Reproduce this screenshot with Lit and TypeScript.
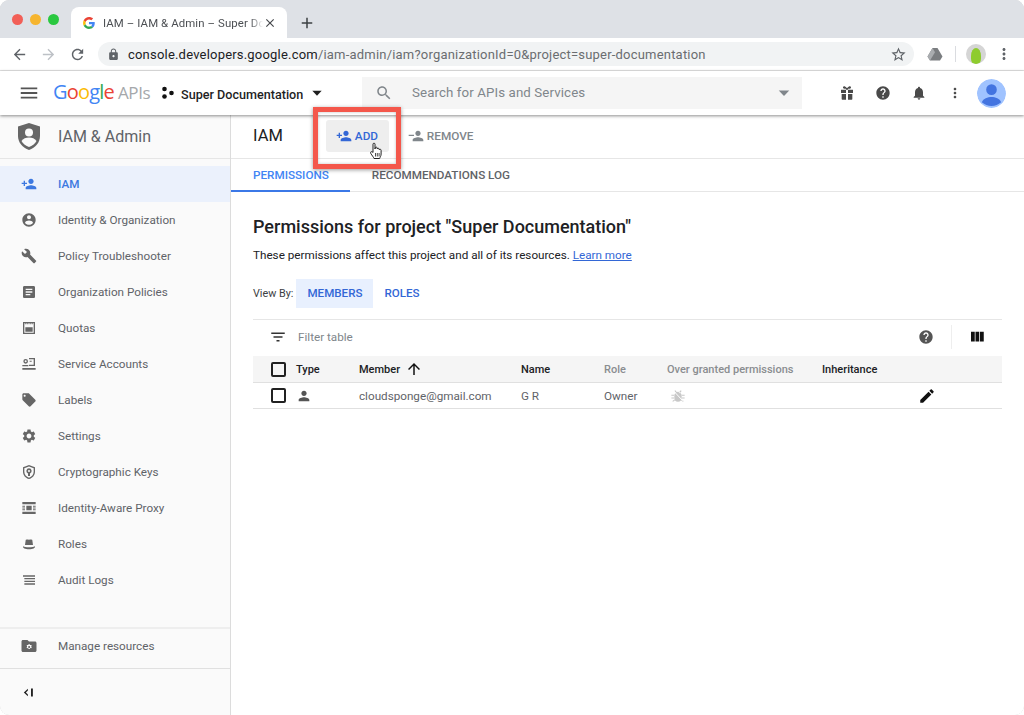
import { LitElement, html, css, svg } from 'lit';
import { customElement } from 'lit/decorators.js';

const P = {
  personAdd: 'M15 12c2.21 0 4-1.79 4-4s-1.79-4-4-4-4 1.79-4 4 1.79 4 4 4zm-9-2V7H4v3H1v2h3v3h2v-3h3v-2H6zm9 4c-2.67 0-8 1.34-8 4v2h16v-2c0-2.66-5.33-4-8-4z',
  personRemove: 'M15 12c2.21 0 4-1.79 4-4s-1.79-4-4-4-4 1.79-4 4 1.79 4 4 4zM1 10v2h8v-2H1zm14 4c-2.67 0-8 1.34-8 4v2h16v-2c0-2.66-5.33-4-8-4z',
  account: 'M12 2C6.48 2 2 6.48 2 12s4.48 10 10 10 10-4.48 10-10S17.52 2 12 2zm0 3c1.66 0 3 1.34 3 3s-1.34 3-3 3-3-1.34-3-3 1.34-3 3-3zm0 14.2c-2.5 0-4.71-1.28-6-3.22.03-1.99 4-3.08 6-3.08 1.99 0 5.97 1.09 6 3.08-1.29 1.94-3.5 3.22-6 3.22z',
  build: 'M22.7 19l-9.1-9.1c.9-2.3.4-5-1.5-6.9-2-2-5-2.4-7.4-1.3L9 6 6 9 1.6 4.7C.4 7.1.9 10.1 2.9 12.1c1.9 1.9 4.6 2.4 6.9 1.5l9.1 9.1c.4.4 1 .4 1.4 0l2.3-2.3c.5-.4.5-1.1.1-1.4z',
  article: 'M19 3H5c-1.1 0-2 .9-2 2v14c0 1.1.9 2 2 2h14c1.1 0 2-.9 2-2V5c0-1.1-.9-2-2-2zm-5 14H7v-2h7v2zm3-4H7v-2h10v2zm0-4H7V7h10v2z',
  quotas: 'M3 3h18v18H3V3zm2 2v14h14V5h-1.500v1.500H16V5h-1.500v1.500H13V5h-2v1.500H9.500V5H8v1.500H6.500V5H5zM6.500 11h11v6.500h-11V11z',
  service: 'M7 4.500a3.500 3.500 0 1 1 0 7 3.500 3.500 0 0 1 0-7zm0 2a1.500 1.500 0 1 0 0 3 1.500 1.500 0 0 0 0-3zM12 3h9v12h-9v-2h7V5h-7V3zm1 4h3v1.500h-3V7zM2 13.500h9v2H2v-2zM2 18h20v2.500H2V18z',
  label: 'M21.41 11.58l-9-9C12.05 2.22 11.55 2 11 2H4c-1.1 0-2 .9-2 2v7c0 .55.22 1.05.59 1.42l9 9c.36.36.86.58 1.41.58.55 0 1.05-.22 1.41-.59l7-7c.37-.36.59-.86.59-1.41 0-.55-.23-1.06-.59-1.42zM5.5 7C4.67 7 4 6.33 4 5.5S4.67 4 5.5 4 7 4.67 7 5.5 6.33 7 5.5 7z',
  settings: 'M19.14 12.94c.04-.3.06-.61.06-.94 0-.32-.02-.64-.07-.94l2.03-1.58c.18-.14.23-.41.12-.61l-1.92-3.32c-.12-.22-.37-.29-.59-.22l-2.39.96c-.5-.38-1.03-.7-1.62-.94l-.36-2.54c-.04-.24-.24-.41-.48-.41h-3.84c-.24 0-.43.17-.47.41l-.36 2.54c-.59.24-1.13.57-1.62.94l-2.39-.96c-.22-.08-.47 0-.59.22L2.74 8.87c-.12.21-.08.47.12.61l2.03 1.58c-.05.3-.09.63-.09.94s.02.64.07.94l-2.03 1.58c-.18.14-.23.41-.12.61l1.92 3.32c.12.22.37.29.59.22l2.39-.96c.5.38 1.03.7 1.62.94l.36 2.54c.05.24.24.41.48.41h3.84c.24 0 .44-.17.47-.41l.36-2.54c.59-.24 1.13-.56 1.62-.94l2.39.96c.22.08.47 0 .59-.22l1.92-3.32c.12-.22.07-.47-.12-.61l-2.01-1.58zM12 15.6c-1.98 0-3.6-1.62-3.6-3.6s1.62-3.6 3.6-3.6 3.6 1.62 3.6 3.6-1.62 3.6-3.6 3.6z',
  keys: 'M12 1.500L3 5v6.500c0 5.200 3.800 9.700 9 11 5.200-1.300 9-5.800 9-11V5l-9-3.500zm0 2.200l7 2.700v5.100c0 4.100-2.900 7.800-7 9-4.100-1.200-7-4.900-7-9V6.400l7-2.700zM12 6.500a4 4 0 0 0-1.500 7.700V18h3v-3.800A4 4 0 0 0 12 6.500zm0 2.500a1.500 1.500 0 1 1 0 3 1.500 1.500 0 0 1 0-3z',
  proxy: 'M2 3h20v3.500H2V3zM2 17.500h20V21H2v-3.500zM8 8.500h8v7H8v-7zM2 8.500h4V10H2V8.500zM2 11.250h4v1.500H2v-1.500zM2 14h4v1.500H2V14zM18 8.500h4V10h-4V8.500zM18 11.250h4v1.500h-4v-1.500zM18 14h4v1.500h-4V14z',
  roles: 'M7 6.500C7.500 5 9 5.500 12 5.500s4.500-.5 5 1l1 7H6l1-7zM3 15.500c2 1 5 1.500 9 1.500s7-.5 9-1.500c.5 3-3 4.500-9 4.500s-9.500-1.500-9-4.500z',
  audit: 'M3 5h18v2H3V5zm2 4h16v2H5V9zm0 4h16v2H5v-2zm0 4h16v2H5v-2z',
  folder: 'M10 4H4c-1.100 0-2 .9-2 2v12c0 1.100.9 2 2 2h16c1.100 0 2-.9 2-2V8c0-1.100-.9-2-2-2h-8l-2-2zm3 5.500l.5 1.300 1.400-.3.8 1.100-.9 1.100.9 1.100-.8 1.100-1.400-.3-.5 1.300h-1.600l-.5-1.300-1.400.3-.7-1.100.9-1.100-.9-1.100.7-1.100 1.400.3.500-1.300H13zM12.200 12a1.400 1.400 0 1 0 0 2.800 1.400 1.400 0 0 0 0-2.800z',
  help: 'M12 2C6.48 2 2 6.48 2 12s4.48 10 10 10 10-4.48 10-10S17.52 2 12 2zm1 17h-2v-2h2v2zm2.07-7.750l-.9.920C13.450 12.900 13 13.500 13 15h-2v-.5c0-1.100.45-2.100 1.170-2.830l1.240-1.260c.37-.36.59-.86.59-1.410 0-1.100-.9-2-2-2s-2 .9-2 2H8c0-2.210 1.790-4 4-4s4 1.790 4 4c0 .88-.36 1.680-.93 2.250z',
  bell: 'M12 22c1.100 0 2-.9 2-2h-4c0 1.100.89 2 2 2zm6-6v-5c0-3.070-1.640-5.640-4.500-6.320V4c0-.83-.67-1.500-1.500-1.500s-1.500.67-1.500 1.500v.68C7.630 5.360 6 7.920 6 11v5l-2 2v1h16v-1l-2-2z',
  gift: 'M3 7h7.500V5.500C9 6 6.500 5.800 6 4.300 5.600 2.800 7.500 1.500 9 2.300c1.200.6 2 1.700 3 2.700 1-1 1.800-2.100 3-2.700 1.500-.8 3.400.5 3 2-.5 1.500-3 1.700-4.500 1.200V7H21v5h-7.500V7h-3v5H3V7zm1 6.500h6.500V22H5a1 1 0 0 1-1-1v-7.500zm9.500 0H20V21a1 1 0 0 1-1 1h-5.500v-8.500z',
  search: 'M15.500 14h-.79l-.28-.27C15.410 12.590 16 11.110 16 9.500 16 5.910 13.090 3 9.500 3S3 5.910 3 9.500 5.910 16 9.500 16c1.610 0 3.090-.59 4.230-1.570l.27.28v.79l5 4.990L20.490 19l-4.990-5zm-6 0C7.010 14 5 11.990 5 9.500S7.010 5 9.500 5 14 7.010 14 9.500 11.990 14 9.500 14z',
  menu: 'M3 18h18v-2H3v2zm0-5h18v-2H3v2zm0-7v2h18V6H3z',
  more: 'M12 8c1.100 0 2-.9 2-2s-.9-2-2-2-2 .9-2 2 .9 2 2 2zm0 2c-1.100 0-2 .9-2 2s.9 2 2 2 2-.9 2-2-.9-2-2-2zm0 6c-1.100 0-2 .9-2 2s.9 2 2 2 2-.9 2-2-.9-2-2-2z',
  edit: 'M3 17.250V21h3.750L17.810 9.940l-3.750-3.750L3 17.250zM20.710 7.040c.39-.39.39-1.020 0-1.410l-2.340-2.340c-.39-.39-1.020-.39-1.410 0l-1.830 1.830 3.750 3.750 1.830-1.830z',
  filter: 'M10 18h4v-2h-4v2zM3 6v2h18V6H3zm3 7h12v-2H6v2z',
  columns: 'M10 18h5V5h-5v13zm-6 0h5V5H4v13zM16 5v13h5V5h-5z',
  person: 'M12 12c2.210 0 4-1.790 4-4s-1.790-4-4-4-4 1.790-4 4 1.790 4 4 4zm0 2c-2.670 0-8 1.340-8 4v2h16v-2c0-2.660-5.330-4-8-4z',
  up: 'M4 12l1.410 1.410L11 7.830V20h2V7.830l5.580 5.590L20 12l-8-8-8 8z',
  star: 'M22 9.240l-7.190-.62L12 2 9.190 8.630 2 9.240l5.460 4.730L5.820 21 12 17.270 18.180 21l-1.630-7.030L22 9.240zM12 15.400l-3.760 2.270 1-4.280-3.320-2.880 4.380-.38L12 6.100l1.710 4.040 4.380.38-3.320 2.880 1 4.280L12 15.400z',
  back: 'M20 11H7.830l5.590-5.590L12 4l-8 8 8 8 1.410-1.410L7.830 13H20v-2z',
  forward: 'M12 4l-1.410 1.410L16.170 11H4v2h12.170l-5.580 5.590L12 20l8-8z',
  refresh: 'M17.650 6.350C16.200 4.900 14.210 4 12 4c-4.420 0-7.990 3.580-7.990 8s3.570 8 7.990 8c3.730 0 6.840-2.550 7.730-6h-2.080c-.82 2.330-3.040 4-5.650 4-3.310 0-6-2.690-6-6s2.690-6 6-6c1.660 0 3.140.69 4.220 1.780L13 11h7V4l-2.350 2.350z',
  lock: 'M18 8h-1V6c0-2.760-2.240-5-5-5S7 3.240 7 6v2H6c-1.100 0-2 .9-2 2v10c0 1.100.9 2 2 2h12c1.100 0 2-.9 2-2V10c0-1.100-.9-2-2-2zm-6 9c-1.100 0-2-.9-2-2s.9-2 2-2 2 .9 2 2-.9 2-2 2zm3.100-9H8.900V6c0-1.710 1.390-3.100 3.100-3.100 1.710 0 3.100 1.390 3.100 3.100v2z',
  close: 'M19 6.410L17.590 5 12 10.590 6.410 5 5 6.410 10.590 12 5 17.590 6.410 19 12 13.410 17.590 19 19 17.590 13.410 12z',
  add: 'M19 13h-6v6h-2v-6H5v-2h6V5h2v6h6v2z',
  drop: 'M5 8.500l7 7.500 7-7.500z',
  collapse: 'M11 6L4.500 12l6.500 6v-2.800L7.800 12 11 8.800V6zM16 5.500h3v13h-3v-13z',
};

const icon = (d: string, size = 18) => html`<svg class="ic" width=${size} height=${size} viewBox="0 0 24 24" fill="currentColor"><path d=${d}></path></svg>`;

const gMark = svg`<path fill="#ea4335" d="M12 4.800c1.800 0 3.400.6 4.700 1.800l3.400-3.400C18 1.300 15.300.2 12 .2 7.400.2 3.400 2.900 1.400 6.800l4 3.100C6.400 7 9 4.800 12 4.800z"/><path fill="#4285f4" d="M23.500 12.300c0-.9-.1-1.600-.2-2.300H12v4.500h6.500c-.3 1.500-1.100 2.700-2.400 3.600l3.800 2.900c2.200-2 3.600-5 3.600-8.700z"/><path fill="#fbbc05" d="M5.400 14.200c-.3-.7-.4-1.400-.4-2.200s.1-1.500.4-2.200l-4-3.100C.6 8.300.2 10.100.2 12s.4 3.700 1.200 5.300l4-3.100z"/><path fill="#34a853" d="M12 23.800c3.200 0 5.900-1 7.900-2.900l-3.800-2.900c-1.100.7-2.400 1.200-4.100 1.200-3 0-5.600-2-6.600-4.900l-4 3.100c2 3.900 6 6.400 10.600 6.400z"/>`;

const NAV: [string, string][] = [
  ['Identity & Organization', P.account],
  ['Policy Troubleshooter', P.build],
  ['Organization Policies', P.article],
  ['Quotas', P.quotas],
  ['Service Accounts', P.service],
  ['Labels', P.label],
  ['Settings', P.settings],
  ['Cryptographic Keys', P.keys],
  ['Identity-Aware Proxy', P.proxy],
  ['Roles', P.roles],
  ['Audit Logs', P.audit],
];

@customElement('app-root')
export class AppRoot extends LitElement {
  static styles = css`
    :host {
      display: block;
      width: 1024px;
      height: 715px;
      overflow: hidden;
      background: #fff;
      font-family: Roboto, "Liberation Sans", sans-serif;
      color: #3c4043;
    }
    .ic { display: block; flex: none; }
    .window {
      position: relative;
      height: 715px;
      display: flex;
      flex-direction: column;
      border-radius: 9px;
      overflow: hidden;
      box-shadow: inset 0 0 0 1px #d4d4d4;
    }
    .tabstrip {
      height: 38px;
      flex: none;
      background: #dee1e6;
      display: flex;
      align-items: flex-end;
      padding-left: 12px;
    }
    .lights { display: flex; gap: 7px; align-self: flex-start; margin-top: 14px; }
    .lights i { width: 11px; height: 11px; border-radius: 50%; }
    .tab {
      margin-left: 12px;
      width: 216px;
      height: 31px;
      background: #fff;
      border-radius: 8px 8px 0 0;
      display: flex;
      align-items: center;
      padding-left: 12px;
      box-sizing: border-box;
      font-size: 11.4px;
      letter-spacing: .1px;
      color: #4c4f53;
      white-space: nowrap;
    }
    .tab .title {
      width: 160px;
      margin-left: 8px;
      -webkit-mask-image: linear-gradient(90deg, #000 92%, transparent);
      mask-image: linear-gradient(90deg, #000 92%, transparent);
    }
    .tab .x { color: #45484c; margin-left: 0; }
    .newtab { margin: 0 0 6px 11px; color: #3c4043; }
    .toolbar {
      height: 32px;
      flex: none;
      background: #fff;
      display: flex;
      align-items: center;
      padding: 0 8px 0 11px;
      border-bottom: 1px solid #e4e4e4;
      color: #5f6368;
    }
    .nav-btns { display: flex; gap: 12px; width: 87px; }
    .omni {
      width: 816px;
      height: 24px;
      flex: none;
      background: #f1f3f4;
      border-radius: 12px;
      display: flex;
      align-items: center;
      padding: 0 7px 0 9px;
      box-sizing: border-box;
      font-size: 13px;
      letter-spacing: 0.2px;
      white-space: nowrap;
    }
    .omni b { font-weight: 400; color: #202124; }
    .omni .url { margin-left: 8px; color: #6a6d70; flex: 1; }
    .exts { display: flex; align-items: center; margin-left: 13px; gap: 10px; }
    .sep { width: 1px; height: 16px; margin-left: 2px; background: #dadce0; }
    .profile {
      width: 20px; height: 20px; border-radius: 50%; background: #d5d5d5;
      display: flex; align-items: flex-end; justify-content: center; overflow: hidden;
    }
    .profile i { width: 10px; height: 16px; background: #8ecc2e; border-radius: 50% 50% 35% 35%; }
    .appbar {
      position: relative;
      z-index: 2;
      height: 44px;
      flex: none;
      background: #fff;
      display: flex;
      align-items: center;
      box-shadow: 0 1px 3px rgba(0,0,0,.45);
      color: #4a4a4a;
    }
    .burger { margin-left: 18px; color: #555; }
    .logo {
      margin-left: 13px; width: 97px; padding-bottom: 4px; font-size: 20px; white-space: nowrap;
      font-family: "Open Sans", Roboto, sans-serif; letter-spacing: -.8px;
    }
    .logo em { font-style: normal; color: #a5a8ab; margin-left: 4px; letter-spacing: -.4px; font-size: 17px; }
    .project { display: flex; align-items: center; margin-left: 11px; width: 201px; font-size: 12.6px; color: #1f1f1f; font-weight: 500; white-space: nowrap; }
    .project svg:first-child { margin-right: 6px; }
    .project .name { padding-top: 2px; }
    .project .caret { margin-left: 6px; }
    .search {
      width: 440px; height: 32px; flex: none; background: #f5f5f5;
      display: flex; align-items: center; padding: 0 9px 0 13px; box-sizing: border-box;
      font-size: 13.3px; color: #80868b; margin-right: 37px;
    }
    .search span { flex: 1; margin-left: 19px; padding-bottom: 2px; letter-spacing: .1px; }
    .app-icons { display: flex; align-items: center; gap: 20px; }
    .avatar { width: 29px; height: 29px; margin-left: -6px; border-radius: 50%; }
    .body { flex: 1; display: flex; min-height: 0; }
    .side {
      width: 231px; flex: none; box-sizing: border-box; background: #fafafa;
      border-right: 1px solid #dcdcdc; display: flex; flex-direction: column;
    }
    .side-head {
      height: 44px; flex: none; box-sizing: border-box; border-bottom: 1px solid #e6e6e6;
      display: flex; align-items: center; padding-left: 17px; gap: 17px; padding-bottom: 1px;
      font-size: 16px; color: #5f6368;
    }
    .side-list { flex: 1; padding-top: 7px; }
    .item {
      height: 36px; display: flex; align-items: center; padding-left: 21px; gap: 21px;
      font-size: 11.7px; color: #5f6368;
    }
    .item span { padding-bottom: 1px; }
    .item.on { background: #ebf1fc; color: #3c78e0; font-weight: 500; }
    .item .ic { color: #666; }
    .item.on .ic { color: #3c78e0; }
    .side-foot {
      border-top: 2px solid #eee; height: 41px; flex: none; display: flex; align-items: center;
      padding: 0 0 6px 20px; gap: 20px; font-size: 11.7px; color: #5f6368; box-sizing: border-box;
    }
    .side-foot .ic { color: #666; }
    .side-end { border-top: 1px solid #e0e0e0; height: 47px; flex: none; display: flex; align-items: center; padding-left: 21px; color: #222; box-sizing: border-box; }
    main { flex: 1; min-width: 0; background: #fff; display: flex; flex-direction: column; }
    .head {
      height: 44px; flex: none; box-sizing: border-box; border-bottom: 1px solid #e6e6e6; padding-bottom: 2px;
      display: flex; align-items: center; padding-left: 22px; font-size: 16.5px; color: #202124;
    }
    .btn {
      display: flex; align-items: center; gap: 3px; height: 32px; border-radius: 3px;
      font-size: 11.8px; font-weight: 500; box-sizing: border-box; padding: 0 10px;
    }
    .btn.add { margin-left: 43px; width: 63px; background: #eee; color: #3367d6; }
    .btn.remove { margin-left: 9px; color: #80868b; }
    .tabs {
      height: 33px; flex: none; box-sizing: border-box; border-bottom: 1px solid #e6e6e6;
      display: flex; font-size: 11.7px; font-weight: 500; color: #5f6368;
    }
    .tabs div { display: flex; align-items: center; padding: 0 21px 0 22px; height: 32px; box-sizing: border-box; }
    .tabs .on { color: #4285f4; border-bottom: 2px solid #3b78e7; height: 33px; }
    .page { padding: 24px 22px 0; }
    h1 { margin: 0; font-size: 18px; font-weight: 500; color: #202124; line-height: 22px; }
    .sub { margin-top: 7px; font-size: 11.7px; color: #202124; line-height: 20px; }
    .sub a { color: #3367d6; text-decoration: underline; }
    .view { margin-top: 14px; display: flex; align-items: center; font-size: 10.8px; color: #3c4043; height: 29px; }
    .chip { height: 29px; display: flex; align-items: center; padding: 0 11px 1px; box-sizing: border-box; font-size: 11.6px; font-weight: 500; color: #3367d6; }
    .chip.on { background: #e8f0fe; margin-left: 3px; }
    .table { margin-top: 11px; width: 749px; border-top: 1px solid #e6e6e6; font-size: 11.7px; }
    .filter { height: 36px; display: flex; align-items: center; padding: 0 0 2px 16px; box-sizing: border-box; color: #80868b; }
    .filter > .ic { color: #333; }
    .filter .ph { margin-left: 11px; flex: 1; }
    .filter .end { display: flex; align-items: center; color: #555; padding-right: 16px; }
    .filter .sep { height: 24px; margin: 0 16px 0 17px; background: #eee; }
    .filter .cols { color: #111; }
    .row {
      display: grid;
      grid-template-columns: 25px 63px 162px 83px 63px 155px 98px 1fr;
      align-items: center;
      padding-left: 18px;
      height: 26px;
      box-sizing: border-box;
      border-bottom: 1px solid #e0e0e0;
      color: #5f6368;
    }
    .row.th { height: 27px; background: #f5f5f5; font-size: 11px; font-weight: 500; color: #202124; }
    .row .dim { color: #80868b; font-weight: 400; }
    .row.th .dim { font-weight: 500; color: #8a8d90; }
    .box { width: 11px; height: 11px; border: 2px solid #212121; border-radius: 2px; }
    .sort { display: flex; align-items: center; gap: 5px; }
    .sort .ic { color: #111; }
    .bug { color: #c8c8c8; margin-left: 3px; }
    .pen { color: #111; margin-left: -2px; }
    .callout {
      position: absolute; left: 313px; top: 107px; width: 88px; height: 62px;
      box-sizing: border-box; border: 5px solid #f4574b;
      box-shadow: 0 1px 4px rgba(0,0,0,.4), inset 0 0 3px rgba(0,0,0,.25);
      z-index: 3;
    }
    .cursor { position: absolute; left: 369px; top: 142px; z-index: 4; }
  `;

  render() {
    return html`
      <div class="window">
        <div class="tabstrip">
          <div class="lights">
            <i style="background:#f25f57"></i><i style="background:#f6b52f"></i><i style="background:#2ac840"></i>
          </div>
          <div class="tab">
            <svg class="ic" width="12" height="12" viewBox="0 0 24 24">${gMark}</svg>
            <span class="title">IAM – IAM &amp; Admin – Super Do</span>
            <div class="x">${icon(P.close, 14)}</div>
          </div>
          <div class="newtab">${icon(P.add, 18)}</div>
        </div>
        <div class="toolbar">
          <div class="nav-btns">
            ${icon(P.back, 17)}
            <span style="color:#bdc1c6">${icon(P.forward, 17)}</span>
            ${icon(P.refresh, 17)}
          </div>
          <div class="omni">
            ${icon(P.lock, 13)}
            <div class="url"><b>console.developers.google.com</b>/iam-admin/iam?organizationId=0&amp;project=super-documentation</div>
            ${icon(P.star, 17)}
          </div>
          <div class="exts">
            <svg class="ic" width="16" height="14" viewBox="0 0 16 14"><path fill="#7a7d80" d="M5.500 1h5l5 8.500-2.500 4H3L.5 9.500z"/><path fill="#a9acaf" d="M5.500 1L8 5.200 3 13.500.5 9.500z"/></svg>
            <div class="sep"></div>
            <div class="profile"><i></i></div>
            <span style="margin-left:-1px">${icon(P.more, 18)}</span>
          </div>
        </div>
        <div class="appbar">
          <div class="burger">${icon(P.menu, 22)}</div>
          <div class="logo"><span style="color:#4285f4">G</span><span style="color:#ea4335">o</span><span style="color:#fbbc05">o</span><span style="color:#4285f4">g</span><span style="color:#34a853">l</span><span style="color:#ea4335">e</span><em>APIs</em></div>
          <div class="project">
            <svg class="ic" width="14" height="14" viewBox="0 0 14 14" fill="#111"><circle cx="3.500" cy="3" r="2.300"/><circle cx="3.500" cy="10.500" r="2.300"/><circle cx="10.500" cy="7" r="2.300"/></svg>
            <span class="name">Super Documentation</span>
            <span class="caret">${icon(P.drop, 16)}</span>
          </div>
          <div class="search">
            ${icon(P.search, 18)}
            <span>Search for APIs and Services</span>
            ${icon(P.drop, 18)}
          </div>
          <div class="app-icons">
            ${icon(P.gift, 16)}${icon(P.help, 16)}${icon(P.bell, 16)}${icon(P.more, 16)}
            <svg class="avatar" viewBox="0 0 30 30"><circle cx="15" cy="15" r="15" fill="#a0c3ff"/><circle cx="15" cy="11" r="5.500" fill="#4374e0"/><path fill="#4374e0" d="M5 24c1.500-4 6-5.500 10-5.500s8.500 1.500 10 5.500a15 15 0 0 1-20 0z"/></svg>
          </div>
        </div>
        <div class="body">
          <aside class="side">
            <div class="side-head">
              <svg class="ic" width="24" height="27" viewBox="0 0 24 27"><path fill="#666" d="M12 0L1 3.500v9.500c0 6.500 4.500 11.500 11 14 6.500-2.500 11-7.500 11-14V3.500z"/><circle cx="12" cy="9.500" r="4" fill="#fafafa"/><path fill="#fafafa" d="M4.500 18c1.500-2.500 4.500-3.500 7.500-3.500s6 1 7.500 3.500c-1.500 2.800-4.500 5-7.500 6-3-1-6-3.200-7.500-6z"/></svg>
              <span>IAM &amp; Admin</span>
            </div>
            <div class="side-list">
              <div class="item on">${icon(P.personAdd, 16)}<span>IAM</span></div>
              ${NAV.map(([name, d]) => html`<div class="item">${icon(d, 16)}<span>${name}</span></div>`)}
            </div>
            <div class="side-foot">${icon(P.folder, 18)}<span>Manage resources</span></div>
            <div class="side-end">${icon(P.collapse, 15)}</div>
          </aside>
          <main>
            <div class="head">
              <span>IAM</span>
              <div class="btn add">${icon(P.personAdd, 16)}<span>ADD</span></div>
              <div class="btn remove">${icon(P.personRemove, 16)}<span>REMOVE</span></div>
            </div>
            <div class="tabs">
              <div class="on">PERMISSIONS</div>
              <div>RECOMMENDATIONS LOG</div>
            </div>
            <div class="page">
              <h1>Permissions for project "Super Documentation"</h1>
              <div class="sub">These permissions affect this project and all of its resources. <a>Learn more</a></div>
              <div class="view">
                <span>View By:</span>
                <div class="chip on">MEMBERS</div>
                <div class="chip">ROLES</div>
              </div>
              <div class="table">
                <div class="filter">
                  ${icon(P.filter, 18)}
                  <span class="ph">Filter table</span>
                  <div class="end">${icon(P.help, 16)}<div class="sep"></div><div class="cols">${icon(P.columns, 18)}</div></div>
                </div>
                <div class="row th">
                  <div class="box"></div>
                  <div>Type</div>
                  <div class="sort">Member ${icon(P.up, 18)}</div>
                  <div>Name</div>
                  <div class="dim">Role</div>
                  <div class="dim">Over granted permissions</div>
                  <div>Inheritance</div>
                  <div></div>
                </div>
                <div class="row">
                  <div class="box"></div>
                  <div style="color:#555">${icon(P.person, 16)}</div>
                  <div>cloudsponge@gmail.com</div>
                  <div>G R</div>
                  <div>Owner</div>
                  <div class="bug">
                    <svg class="ic" width="16" height="16" viewBox="0 0 24 24"><path fill="currentColor" d="M7.500 8.500a5 5 0 0 1 9 0l1 1.500v5a5.500 5.500 0 0 1-11 0v-5zM8 3.500l3 3.500-1.500 1L6.500 4.500zM16 3.500L13 7l1.500 1 3-3.500z"/><path stroke="currentColor" stroke-width="1.600" d="M2 11h4M18 11h4M2 15h4M18 15h4M4 20l3-2M20 20l-3-2"/><path stroke="#fff" stroke-width="1.500" d="M5 4l14 15"/></svg>
                  </div>
                  <div></div>
                  <div class="pen">${icon(P.edit, 18)}</div>
                </div>
              </div>
            </div>
          </main>
        </div>
        <div class="callout"></div>
        <svg class="cursor" width="15" height="18" viewBox="0 0 15 18"><path fill="#fff" stroke="#222" stroke-width="1" stroke-linejoin="round" d="M4 9V2.200C4 .8 6 .8 6 2.200V7l.2-1c.2-1.200 2-1.200 2 .1V7c.2-1 2-1 2 .2v.7c.3-1 1.900-.8 1.900.4V12c0 2-1 3-1.400 4.500H5C4.500 15 3 13.500 1.800 11.500 1 10 2.500 8.800 4 10.500z"/><path stroke="#222" stroke-width=".8" d="M6.500 11v3.500M8.300 11v3.500M10.100 11v3.500"/></svg>
      </div>
    `;
  }
}
